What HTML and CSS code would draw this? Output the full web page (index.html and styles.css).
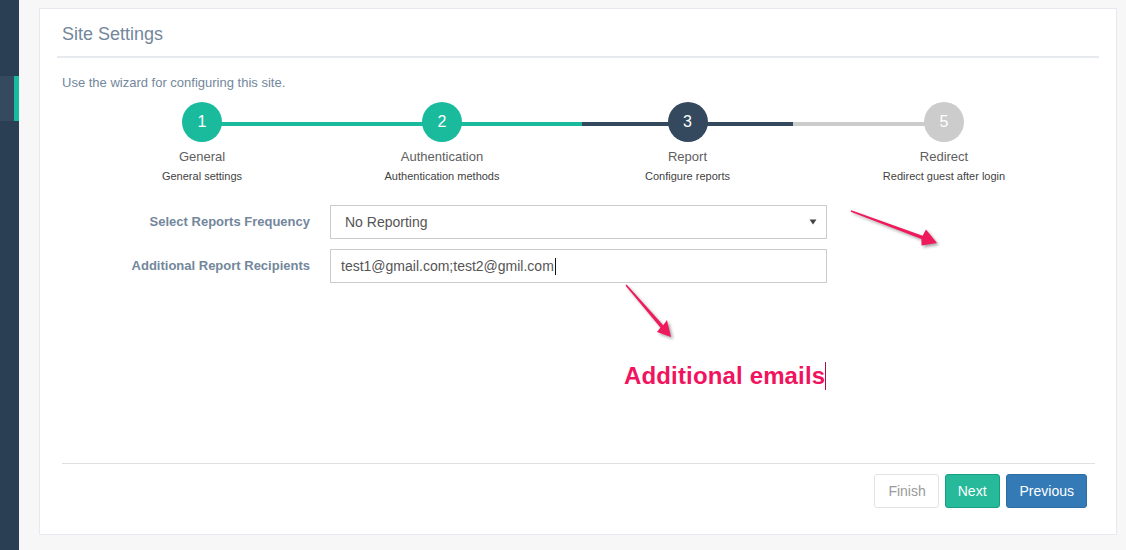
FILE: index.html
```html
<!DOCTYPE html>
<html lang="en">
<head>
<meta charset="utf-8">
<title>Site Settings</title>
<link rel="stylesheet" href="styles.css">
</head>
<body>
<div class="app">
  <aside class="sidebar">
    <div class="nav-item active"></div>
  </aside>
  <main class="main">
    <section class="panel">
      <header class="panel-title"><h2>Site Settings</h2></header>
      <p class="intro">Use the wizard for configuring this site.</p>
      <ol class="steps">
        <li class="step done first"><span class="step-no">1</span><span class="step-name">General</span><small class="step-desc">General settings</small></li>
        <li class="step done"><span class="step-no">2</span><span class="step-name">Authentication</span><small class="step-desc">Authentication methods</small></li>
        <li class="step selected"><span class="step-no">3</span><span class="step-name">Report</span><small class="step-desc">Configure reports</small></li>
        <li class="step disabled last"><span class="step-no">5</span><span class="step-name">Redirect</span><small class="step-desc">Redirect guest after login</small></li>
      </ol>
      <form class="settings">
        <label class="field-label">Select Reports Frequency</label>
        <div class="control select"><span>No Reporting</span><svg class="select-arrow" width="8" height="6" viewBox="0 0 8 6"><path d="M0.5 0.5 L7.5 0.5 L4 5.5 Z" fill="#444"/></svg></div>
        <label class="field-label">Additional Report Recipients</label>
        <div class="control input"><span>test1@gmail.com;test2@gmil.com</span><span class="text-caret"></span></div>
      </form>
      <div class="spacer"></div>
      <footer class="actions">
        <div class="buttons">
          <button class="btn btn-finish" type="button">Finish</button>
          <button class="btn btn-next" type="button">Next</button>
          <button class="btn btn-prev" type="button">Previous</button>
        </div>
      </footer>
    </section>
  </main>
  <div class="annotation-layer">
    <svg class="arrows" width="1126" height="550" viewBox="0 0 1126 550">
      <polygon points="851.3,210.3 922.6,235.7 926,229.5 937,243 921.5,245.5 921.4,239.1 850.7,211.7" />
      <polygon points="626.6,284.5 663.2,325.2 667,320 671,337 657,332 660.4,327.6 625.4,285.5" />
    </svg>
    <div class="note">Additional emails<span class="note-caret"></span></div>
  </div>
</div>
</body>
</html>
```
FILE: styles.css
```css
* { box-sizing: border-box; }
html, body { margin: 0; padding: 0; height: 100%; }
body {
  font-family: "Liberation Sans", Arial, sans-serif;
  font-size: 13px;
  color: #73879c;
  background: #f7f7f7;
}
.app {
  position: relative;
  display: flex;
  height: 550px;
  overflow: hidden;
}
.sidebar {
  width: 19px;
  flex: none;
  background: #2a3f54;
  padding-top: 76px;
}
.nav-item.active {
  height: 45px;
  background: #35495f;
  border-right: 5px solid #1abb9c;
}
.main {
  flex: 1;
  padding: 8px 9px 15px 20px;
  display: flex;
}
.panel {
  flex: 1;
  background: #fff;
  border: 1px solid #e6e9ed;
  padding: 6px 17px 26px 17px;
  display: flex;
  flex-direction: column;
}
.panel-title {
  padding: 2px 5px 5px;
  border-bottom: 2px solid #e6e9ed;
}
.panel-title h2 {
  margin: 0;
  font-size: 18px;
  font-weight: 400;
  line-height: 34px;
  color: #73879c;
}
.intro {
  margin: 16px 0 0;
  padding-left: 5px;
  line-height: 18px;
}
.steps {
  list-style: none;
  margin: 10px 0 0 45px;
  padding: 0;
  display: grid;
  grid-template-columns: 200px 280px 211px 302px;
}
.step {
  position: relative;
  text-align: center;
}
.step::before {
  content: "";
  position: absolute;
  top: 20px;
  left: 0;
  width: 100%;
  height: 4px;
  background: #ccc;
}
.step.first::before { left: 50%; width: 50%; }
.step.last::before { width: 50%; }
.step.done::before, .step.done .step-no { background: #1abb9c; }
.step.selected::before, .step.selected .step-no { background: #34495e; }
.step.disabled::before, .step.disabled .step-no { background: #ccc; }
.step-no {
  position: relative;
  z-index: 1;
  display: block;
  width: 40px;
  height: 40px;
  margin: 0 auto 6px;
  border-radius: 50%;
  line-height: 40px;
  font-size: 16px;
  color: #fff;
}
.step-name {
  display: block;
  font-size: 13px;
  line-height: 18px;
  color: #5e5e5e;
}
.step-desc {
  display: block;
  margin-top: 3px;
  font-size: 11px;
  line-height: 14px;
  color: #3f3f3f;
}
.settings {
  margin-top: 22px;
  display: grid;
  grid-template-columns: 253px 497px;
  column-gap: 20px;
  row-gap: 10px;
}
.field-label {
  text-align: right;
  font-weight: 700;
  font-size: 13px;
  line-height: 34px;
  color: #73879c;
}
.control {
  height: 34px;
  border: 1px solid #ccc;
  display: flex;
  align-items: center;
  font-size: 14px;
  color: #555;
}
.select {
  padding: 0 9px 0 14px;
  justify-content: space-between;
}
.input {
  padding: 0 10px;
}
.text-caret {
  display: inline-block;
  width: 1px;
  height: 17px;
  background: #111;
  margin-left: 1px;
}
.spacer { flex: 1; }
.actions {
  margin: 0 4px 0 5px;
  border-top: 1px solid #e0e0e0;
}
.buttons {
  display: flex;
  justify-content: flex-end;
  gap: 6px;
  padding: 10px 8px 0 0;
}
.btn {
  font-family: "Liberation Sans", Arial, sans-serif;
  font-size: 14px;
  line-height: 20px;
  height: 34px;
  padding: 6px 12px;
  border-radius: 3px;
  border: 1px solid transparent;
  cursor: pointer;
}
.btn-finish {
  padding-left: 13px;
  background: #fff;
  border-color: #e3e3e3;
  color: #9a9a9a;
}
.btn-next {
  background: #26b99a;
  border-color: #169f85;
  color: #fff;
}
.btn-prev {
  padding-left: 13px;
  background: #337ab7;
  border-color: #2e6da4;
  color: #fff;
}
.annotation-layer {
  position: absolute;
  left: 0;
  top: 0;
  width: 1126px;
  height: 550px;
  pointer-events: none;
}
.arrows {
  position: absolute;
  left: 0;
  top: 0;
  fill: #ef1a5c;
  filter: drop-shadow(2px 2px 1.5px rgba(0, 0, 0, 0.35));
}
.note {
  position: absolute;
  left: 624px;
  top: 362px;
  font-weight: 700;
  font-size: 24px;
  line-height: 28px;
  letter-spacing: 0.15px;
  color: #f0145e;
  white-space: nowrap;
  display: flex;
  align-items: center;
}
.note-caret {
  display: inline-block;
  width: 1px;
  height: 28px;
  background: #b0103f;
}
```
